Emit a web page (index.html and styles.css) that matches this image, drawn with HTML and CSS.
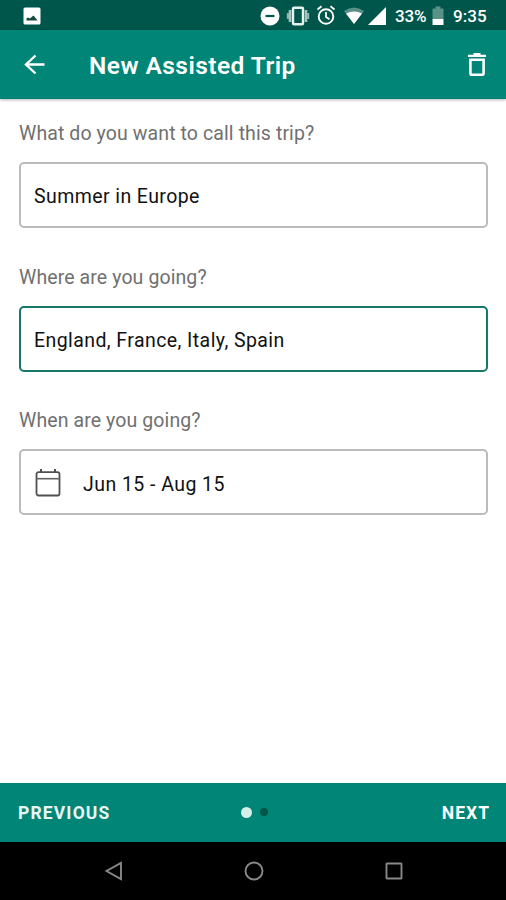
FILE: index.html
```html
<!DOCTYPE html>
<html lang="en">
<head>
<meta charset="utf-8">
<title>New Assisted Trip</title>
<link rel="stylesheet" href="styles.css">
</head>
<body>
<div class="screen">
  <div class="status">
    <svg class="photo" width="18" height="18" viewBox="0 0 18 18"><rect x=".5" y=".5" width="17" height="17" rx="1.500" fill="#fff"/><path d="M3.500 13.500v-2l1.500-1 1.500 1 1-.5 3-2.500 4 5z" fill="#12483f"/></svg>
    <div class="tray">
      <svg width="20" height="20" viewBox="0 0 20 20"><circle cx="10" cy="10" r="9.500" fill="#fff"/><path d="M5.500 10h9" stroke="#00564a" stroke-width="2.200"/></svg>
      <svg class="vibrate" width="24" height="20" viewBox="0 0 24 20"><path d="M4 4v12M20 4v12" stroke="#fff" stroke-opacity=".65" stroke-width="2.600"/><path d="M1.800 7v6M22.200 7v6" stroke="#fff" stroke-opacity=".55" stroke-width="2"/><rect x="7" y="1.700" width="10" height="16.600" rx="1" fill="none" stroke="#e8f2f0" stroke-width="2.400"/></svg>
      <svg class="alarm" width="20" height="21" viewBox="0 0 20 21"><circle cx="10" cy="11.500" r="7.300" fill="none" stroke="#fff" stroke-width="1.900"/><path d="M10 7v5l3.500 2.300M1.500 4.500 5.500 1.200M18.500 4.500l-4-3.300" fill="none" stroke="#fff" stroke-width="1.800"/></svg>
      <svg class="wifi" width="22" height="18" viewBox="0 0 22 18"><path d="M1 4Q11-3 21 4L11 17z" fill="#fff" fill-opacity=".35"/><path d="M3 6.500Q11 2.500 19 6.500L11 17z" fill="#fff"/></svg>
      <svg class="signal" width="18" height="18" viewBox="0 0 18 18"><path d="M18 0v18H0z" fill="#fff"/></svg>
      <span class="percent">33%</span>
      <svg class="battery" width="12" height="20" viewBox="0 0 12 20"><path d="M.5 2.500h3V.5h5v2h3V13H.5z" fill="#fff" fill-opacity=".35"/><path d="M.5 13h11v6H.5z" fill="#fff"/></svg>
      <span class="clock">9:35</span>
    </div>
  </div>
  <header class="appbar">
    <svg width="22" height="22" viewBox="0 0 22 22"><path d="M20.500 10.500H2.500M11.500 1.500 2 10.500l9.500 9" fill="none" stroke="#fff" stroke-width="2.400"/></svg>
    <h1>New Assisted Trip</h1>
    <svg class="trash" width="18" height="24" viewBox="0 0 18 24"><path d="M0 2.800h18M5.500 1.200h7" stroke="#fff" stroke-width="2.200"/><path d="M2.400 6.800h13.200v13.500a1.500 1.500 0 0 1-1.500 1.500H3.900a1.500 1.500 0 0 1-1.500-1.500z" fill="none" stroke="#fff" stroke-width="2.600"/></svg>
  </header>
  <main>
    <section class="field"><div class="label">What do you want to call this trip?</div><div class="box">Summer in Europe</div></section>
    <section class="field"><div class="label">Where are you going?</div><div class="box focused">England, France, Italy, Spain</div></section>
    <section class="field"><div class="label">When are you going?</div><div class="box date">
      <svg width="26" height="28" viewBox="0 0 26 28"><rect x="1.500" y="3.200" width="23" height="23.300" rx="2" fill="none" stroke="#505050" stroke-width="1.800"/><path d="M1.500 9.700h23" stroke="#606060" stroke-width="1.600"/><path d="M6 0v3.500M20 0v3.500" stroke="#505050" stroke-width="2"/></svg>
      <span>Jun 15 - Aug 15</span></div></section>
  </main>
  <footer>
    <span class="previous">PREVIOUS</span>
    <div class="dots"><i class="dot active"></i><i class="dot"></i></div>
    <span class="next">NEXT</span>
  </footer>
  <nav>
    <svg width="20" height="20" viewBox="0 0 20 20"><path d="M17 1.800v16.400L2.500 10z"/></svg>
    <svg width="20" height="20" viewBox="0 0 20 20"><circle cx="10" cy="10" r="8.500"/></svg>
    <svg width="20" height="20" viewBox="0 0 20 20"><rect x="2.500" y="2.500" width="15" height="15" rx=".5"/></svg>
  </nav>
</div>
</body>
</html>
```
FILE: styles.css
```css
* { box-sizing: border-box; }
body { margin: 0; font-family: Roboto, "Liberation Sans", sans-serif; background: #fff; }
svg { display: block; flex: none; }
.screen { width: 506px; height: 900px; display: flex; flex-direction: column; overflow: hidden; }
.status { height: 30px; flex: none; background: #00564a; display: flex; justify-content: space-between; align-items: center; padding: 1px 18px 0 23px; color: #fff; font-size: 17px; font-weight: 500; }
.tray { display: flex; align-items: center; white-space: nowrap; }
.vibrate { margin-left: 6px; }
.alarm { margin-left: 6px; }
.wifi { margin-left: 7px; }
.signal { margin-left: 3px; }
.percent { margin-left: 9px; width: 33px; letter-spacing: -.1px; }
.battery { margin-left: 4px; }
.clock { margin-left: 9px; width: 35px; letter-spacing: .1px; }
.appbar { height: 69px; flex: none; background: #008577; display: flex; align-items: center; padding: 0 20px 0 24px; box-shadow: 0 1px 3px rgba(0,0,0,.3); color: #fff; }
h1 { margin: 3px auto 0 43px; font-size: 24.500px; line-height: 30px; font-weight: 600; letter-spacing: .45px; white-space: nowrap; }
main { flex: 1; padding: 21px 18px 0 19px; }
.field { height: 143.600px; }
.label { height: 42px; line-height: 27px; font-size: 19.500px; letter-spacing: .1px; color: #707070; white-space: nowrap; }
.box { height: 66px; border: 2px solid #bbb; border-radius: 5px; padding: 3px 13px 0; display: flex; align-items: center; color: #111; font-size: 19.500px; letter-spacing: .42px; white-space: nowrap; }
.focused { border-color: #17786a; }
.date { padding-left: 14px; }
.date svg { margin-top: -1px; }
.date span { margin: 1px 0 0 22px; letter-spacing: .45px; }
footer { height: 59px; flex: none; background: #008577; display: grid; grid-template-columns: 1fr auto 1fr; align-items: center; color: #e8f5f2; padding: 0 16px 0 18px; font-size: 17.500px; font-weight: 700; letter-spacing: 1.150px; }
.next { justify-self: end; color: #fff; letter-spacing: 1px; }
.dots { display: flex; align-items: center; gap: 8px; margin-top: -1px; }
.dot { width: 8px; height: 8px; border-radius: 50%; background: #00564a; }
.active { width: 11px; height: 11px; background: #d5f0e8; }
nav { height: 58px; flex: none; background: #000; display: flex; justify-content: center; gap: 120px; padding: 19px 0 0 1px; }
nav path, nav circle, nav rect { fill: none; stroke: #888; stroke-width: 1.900; }
```
